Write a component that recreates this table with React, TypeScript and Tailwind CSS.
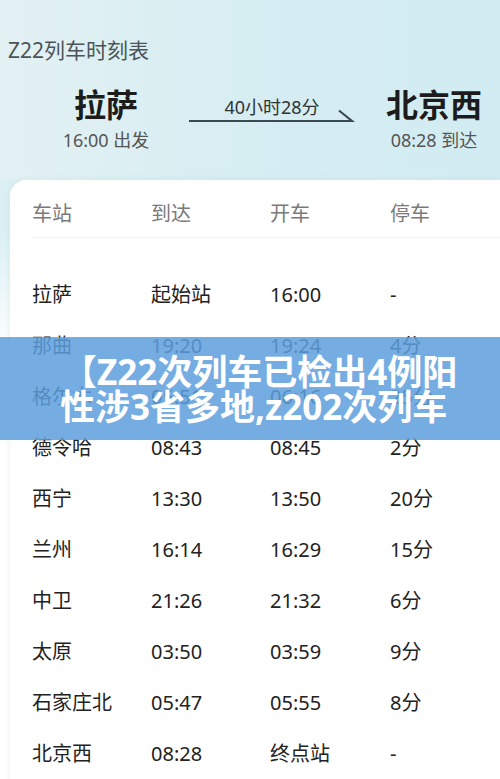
const rows = [
  ["拉萨", "起始站", "16:00", "-"],
  ["那曲", "19:20", "19:24", "4分"],
  ["格尔木", "05:51", "06:16", "25分"],
  ["德令哈", "08:43", "08:45", "2分"],
  ["西宁", "13:30", "13:50", "20分"],
  ["兰州", "16:14", "16:29", "15分"],
  ["中卫", "21:26", "21:32", "6分"],
  ["太原", "03:50", "03:59", "9分"],
  ["石家庄北", "05:47", "05:55", "8分"],
  ["北京西", "08:28", "终点站", "-"],
]

const font = { fontFamily: '"Noto Sans", "Noto Sans CJK SC", sans-serif' }

export default function App() {
  return (
    <div
      className="relative w-[500px] h-[779px] overflow-hidden bg-gradient-to-b from-[#d9eef3] via-[#dcf0f4] via-30% to-white to-45%"
      style={font}
    >
      {/* Header */}
      <div className="bg-gradient-to-r from-[#e3f1f3] via-[#d6edf2] to-[#d2ecf3]">
        <div className="pt-[36px] pl-[8px] text-[21px] leading-[28px] text-[#4b5557]">Z22列车时刻表</div>
        <div className="mt-[21px] flex">
          <div className="ml-[36px] w-[140px] text-center">
            <div className="text-[32px] leading-[40px] font-bold text-[#1c1c1c]">拉萨</div>
            <div className="mt-[3px] text-[18px] leading-[24px] text-[#555]">16:00 出发</div>
          </div>
          <div className="w-[192px] pt-[11px] flex flex-col">
            <div className="text-center text-[18px] leading-[22px] text-[#2d3436]">40小时28分</div>
            <svg className="-mt-[9px] ml-[13px]" width="166" height="14" viewBox="0 0 166 14">
              <path d="M0 12 H163 L150 1.5" fill="none" stroke="#3b4a50" strokeWidth="2.2" />
            </svg>
          </div>
          <div className="w-[132px] text-center">
            <div className="text-[32px] leading-[40px] font-bold text-[#1c1c1c]">北京西</div>
            <div className="mt-[3px] text-[18px] leading-[24px] text-[#555]">08:28 到达</div>
          </div>
        </div>
        <div className="h-[28px]" />
      </div>

      {/* Timetable card */}
      <div className="ml-[10px] bg-white rounded-tl-2xl pt-[10px] pl-[22px] shadow-[0_0_6px_rgba(180,215,225,0.35)] h-[620px]">
        <div className="grid grid-cols-[119px_119px_120px_1fr] h-[48px] items-center border-b border-[#f0f2f2] text-[20px] text-[#7a7a7a]">
          <div>车站</div>
          <div>到达</div>
          <div>开车</div>
          <div>停车</div>
        </div>
        <div className="pt-[31px]">
          {rows.map((r) => (
            <div
              key={r[0]}
              className="grid grid-cols-[119px_119px_120px_1fr] h-[51px] items-center text-[20px] text-[#222]"
            >
              {r.map((c, i) => (
                <div key={i}>{c}</div>
              ))}
            </div>
          ))}
        </div>
      </div>

      {/* Title overlay banner */}
      <div className="absolute left-0 right-0 top-[337px] h-[103px] bg-[#5d9fdd]/85 flex flex-col justify-center pl-[60px] text-white font-bold text-[35px] leading-[35px] whitespace-nowrap">
        <div className="pl-[2px]">【Z22次列车已检出4例阳</div>
        <div>性涉3省多地,z202次列车</div>
      </div>
    </div>
  )
}
